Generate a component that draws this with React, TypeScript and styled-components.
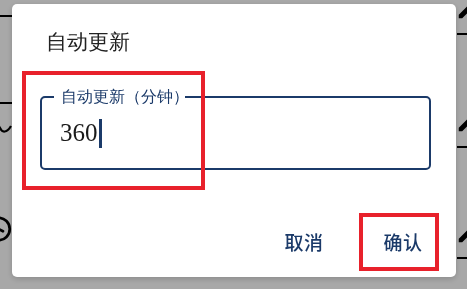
import styled, { createGlobalStyle } from "styled-components";
import { Clock } from "lucide-react";
import { MdEdit } from "react-icons/md";

const GlobalStyle = createGlobalStyle`
  html, body {
    margin: 0;
    padding: 0;
    background: #ffffff;
  }
  * {
    box-sizing: border-box;
  }
`;

const NAVY = "#1b3a69";
const RED = "#e8212b";
const FONT = `"Noto Sans CJK SC", "Noto Sans", sans-serif`;

const Page = styled.div`
  width: 467px;
  height: 289px;
  overflow: hidden;
  background: #ffffff;
  display: flex;
  justify-content: space-between;
  font-family: ${FONT};
`;

const LeftRail = styled.div`
  width: 12px;
  overflow: hidden;
  display: flex;
  flex-direction: column;
  color: #000;
`;

const RightRail = styled.div`
  width: 10px;
  overflow: hidden;
  display: flex;
  flex-direction: column;
  color: #000;
`;

const RailRow = styled.div<{ $h: number }>`
  height: ${(p) => p.$h}px;
  flex: none;
  border-bottom: 2px solid #000;
  display: flex;
  align-items: flex-end;
  padding-bottom: 12px;
`;

const RailIcon = styled.div<{ $top?: number; $shift: number }>`
  margin-top: ${(p) => p.$top ?? 0}px;
  margin-left: ${(p) => p.$shift}px;
  display: flex;
`;

const Scrim = styled.div`
  position: fixed;
  inset: 0;
  background: rgba(0, 0, 0, 0.34);
  display: flex;
  align-items: flex-start;
  padding: 4px 0 0 12px;
`;

const Dialog = styled.div`
  position: relative;
  width: 444px;
  height: 273px;
  background: #ffffff;
  border-radius: 5px;
  display: flex;
  flex-direction: column;
  padding-top: 24px;
  box-shadow: 0 2px 6px rgba(0, 0, 0, 0.18);
`;

const Title = styled.div`
  padding-left: 34px;
  font-size: 21px;
  line-height: 28px;
  color: #222222;
`;

const Field = styled.fieldset`
  margin: 31px 25px 0 28px;
  min-width: 0;
  padding: 0 18px 20px;
  border: 2.5px solid ${NAVY};
  border-radius: 5px;
`;

const Legend = styled.legend`
  margin-left: -6px;
  padding: 0 0 0 7px;
  width: 131px;
  white-space: nowrap;
  font-size: 16px;
  line-height: 20px;
  color: ${NAVY};
`;

const ValueRow = styled.div`
  margin-top: 11px;
  height: 30px;
  display: flex;
  align-items: center;
  font-size: 25px;
  color: #1a1a1a;
`;

const Caret = styled.span`
  width: 3px;
  height: 29px;
  margin-left: 1px;
  background: ${NAVY};
`;

const Actions = styled.div`
  margin-top: 42px;
  display: flex;
  justify-content: flex-end;
  gap: 19px;
  padding-right: 13px;
`;

const ActionButton = styled.button`
  width: 80px;
  height: 58px;
  border: none;
  background: transparent;
  font-family: ${FONT};
  font-size: 19px;
  font-weight: 500;
  color: ${NAVY};
  letter-spacing: 0.5px;
  padding: 0;
`;

const Highlight = styled.div<{ $l: number; $t: number; $w: number; $h: number }>`
  position: absolute;
  left: ${(p) => p.$l}px;
  top: ${(p) => p.$t}px;
  width: ${(p) => p.$w}px;
  height: ${(p) => p.$h}px;
  border: 4px solid ${RED};
  pointer-events: none;
`;

function WaveMark() {
  return (
    <svg width="24" height="12" viewBox="0 0 24 12" fill="none" stroke="#000" strokeWidth="2.2">
      <path d="M1 8 C5 1, 10 1, 12 6 S19 11, 23 4" />
    </svg>
  );
}

export default function App() {
  return (
    <>
      <GlobalStyle />
      <Page>
        <LeftRail>
          <RailRow $h={17} />
          <RailRow $h={87} />
          <RailIcon $top={18} $shift={-12}>
            <WaveMark />
          </RailIcon>
          <RailIcon $top={80} $shift={-15}>
            <Clock size={30} strokeWidth={2.4} />
          </RailIcon>
        </LeftRail>
        <RightRail>
          <RailRow $h={35}>
            <RailIcon $shift={-1}>
              <MdEdit size={22} />
            </RailIcon>
          </RailRow>
          <RailRow $h={113}>
            <RailIcon $shift={-1}>
              <MdEdit size={22} />
            </RailIcon>
          </RailRow>
          <RailRow $h={111}>
            <RailIcon $shift={-1}>
              <MdEdit size={22} />
            </RailIcon>
          </RailRow>
        </RightRail>
      </Page>
      <Scrim>
        <Dialog>
          <Title>自动更新</Title>
          <Field>
            <Legend>自动更新（分钟）</Legend>
            <ValueRow>
              360
              <Caret />
            </ValueRow>
          </Field>
          <Actions>
            <ActionButton>取消</ActionButton>
            <ActionButton>确认</ActionButton>
          </Actions>
          <Highlight $l={10} $t={67} $w={183} $h={119} />
          <Highlight $l={347} $t={209} $w={80} $h={58} />
        </Dialog>
      </Scrim>
    </>
  );
}
